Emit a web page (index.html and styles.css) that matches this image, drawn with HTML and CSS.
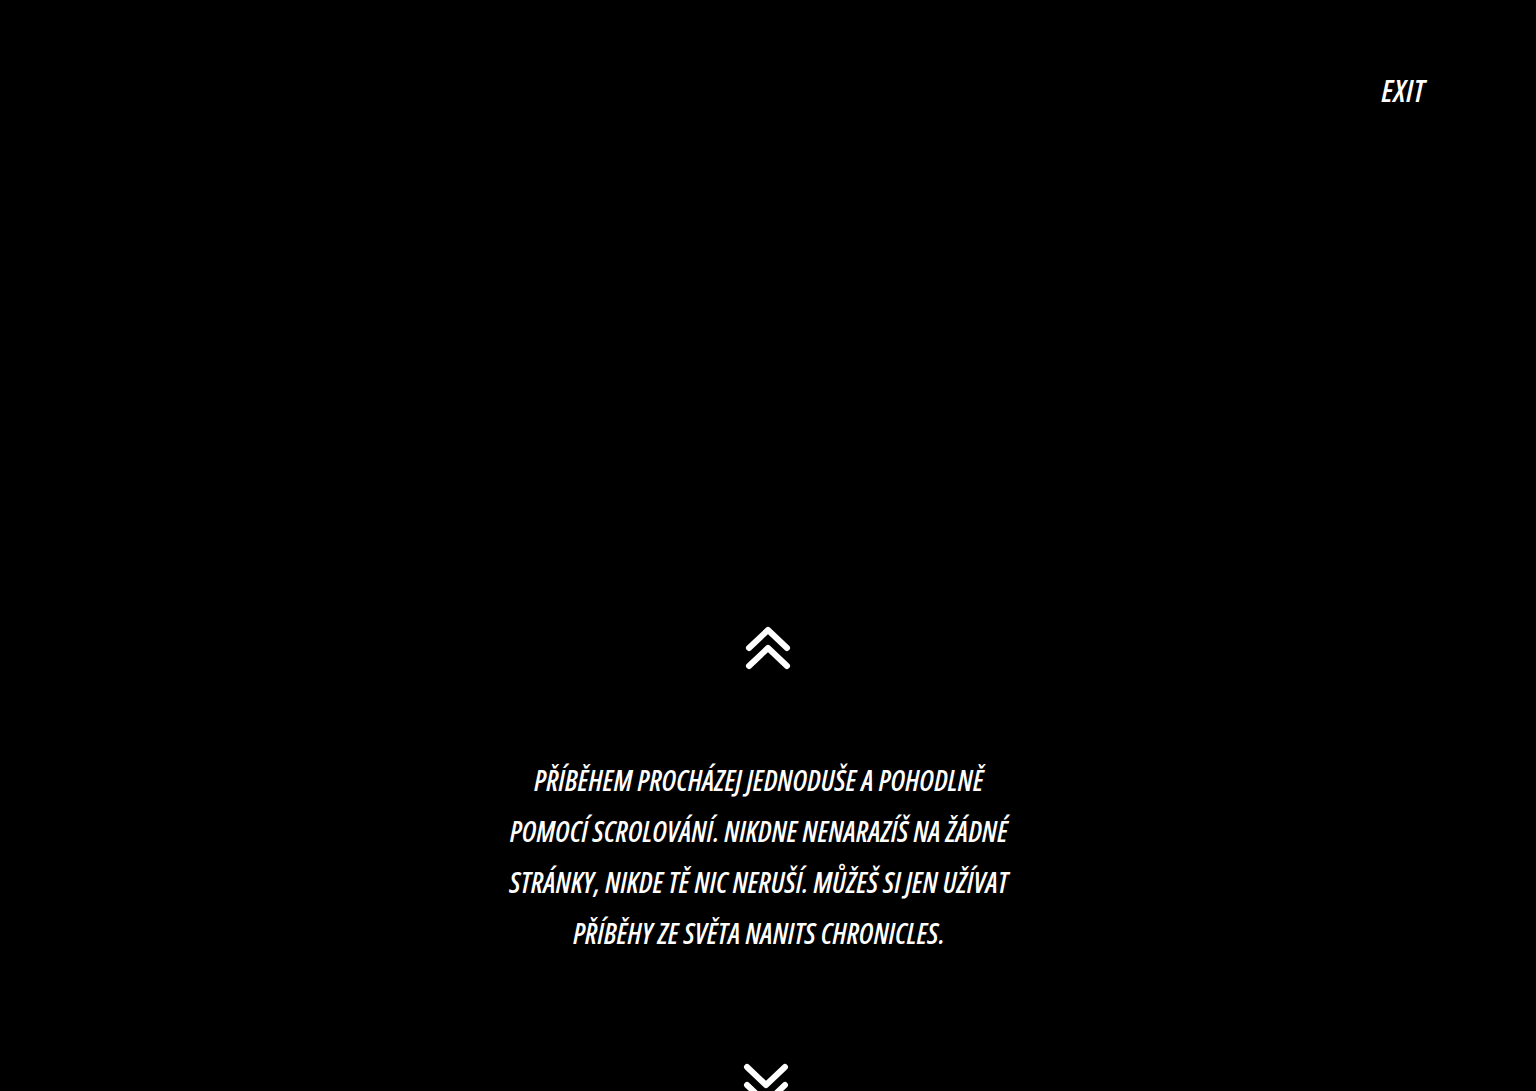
FILE: index.html
```html
<!DOCTYPE html>
<html lang="cs">
<head>
<meta charset="utf-8">
<link rel="stylesheet" href="styles.css">
</head>
<body>
<div class="page">
  <header class="top">
    <a class="exit" href="#">EXIT</a>
  </header>
  <main class="intro">
    <div class="chev chev-up">
      <svg width="46" height="44" viewBox="0 0 46 44"><path d="M4 22 L23 4 L42 22 M4 40 L23 22 L42 40" fill="none" stroke="#fff" stroke-width="6" stroke-linecap="round" stroke-linejoin="round"/></svg>
    </div>
    <p class="text">PŘÍBĚHEM PROCHÁZEJ JEDNODUŠE A POHODLNĚ POMOCÍ SCROLOVÁNÍ. NIKDNE NENARAZÍŠ NA ŽÁDNÉ STRÁNKY, NIKDE TĚ NIC NERUŠÍ. MŮŽEŠ SI JEN UŽÍVAT PŘÍBĚHY ZE SVĚTA NANITS CHRONICLES.</p>
    <div class="chev chev-down">
      <svg width="46" height="44" viewBox="0 0 46 44"><path d="M4 4 L23 22 L42 4 M4 22 L23 40 L42 22" fill="none" stroke="#fff" stroke-width="6" stroke-linecap="round" stroke-linejoin="round"/></svg>
    </div>
  </main>
</div>
</body>
</html>
```
FILE: styles.css
```css
html, body {
  margin: 0;
  padding: 0;
  background: #000;
  height: 100%;
  overflow: hidden;
}
.page {
  height: 1091px;
  font-family: "Open Sans", "Liberation Sans", sans-serif;
  font-style: italic;
  font-weight: 600;
  font-stretch: 75%;
  color: #fff;
}
.top {
  display: flex;
  justify-content: flex-end;
  padding: 72px 111px 0 0;
  height: 40px;
}
.exit {
  color: #fff;
  text-decoration: none;
  font-size: 31px;
  letter-spacing: 0.3px;
  line-height: 36px;
}
.intro {
  display: flex;
  flex-direction: column;
  align-items: center;
  padding-top: 514px;
}
.chev {
  display: flex;
  justify-content: center;
  width: 46px;
}
.text {
  width: 510px;
  margin: 85px 0 0 -18px;
  text-align: center;
  font-size: 28px;
  letter-spacing: 0.18px;
  line-height: 51px;
}
.chev-down {
  margin-top: 104px;
  margin-left: -4px;
}
```
